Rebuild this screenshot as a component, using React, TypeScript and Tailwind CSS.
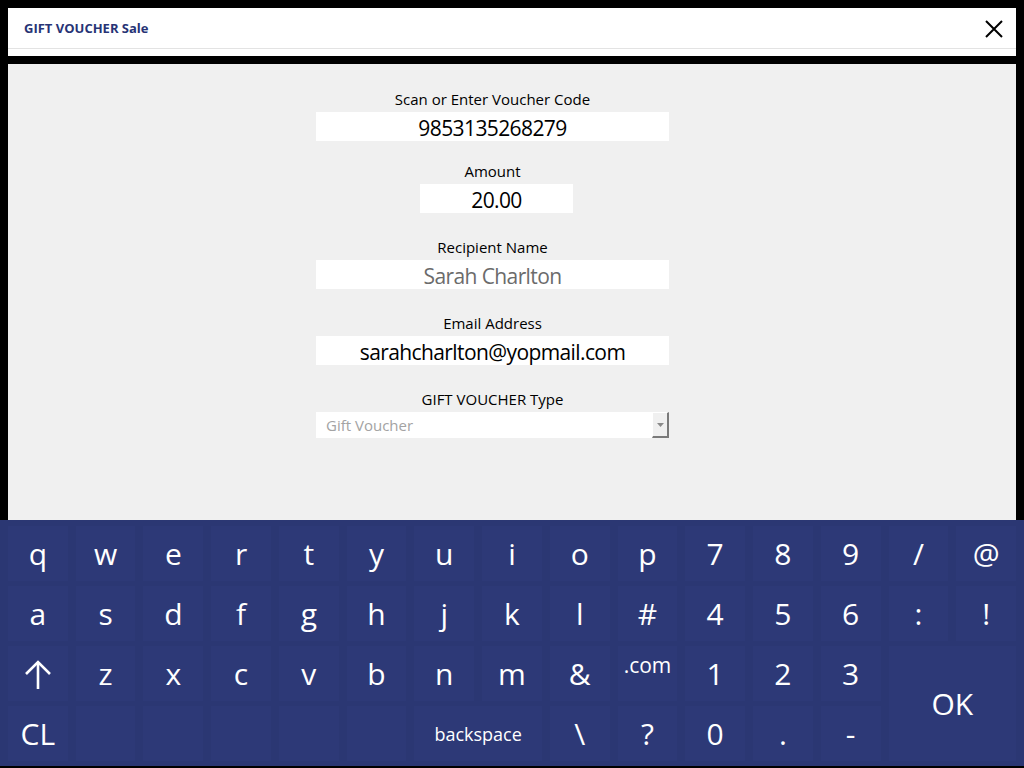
import React from "react";

const font = { fontFamily: '"Open Sans", "Noto Sans", sans-serif' };

type Key = { label: string; col: number; row: number; span?: number; rows?: number };

const rows: string[][] = [
  ["q", "w", "e", "r", "t", "y", "u", "i", "o", "p", "7", "8", "9", "/", "@"],
  ["a", "s", "d", "f", "g", "h", "j", "k", "l", "#", "4", "5", "6", ":", "!"],
  ["SHIFT", "z", "x", "c", "v", "b", "n", "m", "&", ".com", "1", "2", "3"],
];

const keys: Key[] = [];
rows.forEach((r, ri) => r.forEach((label, ci) => keys.push({ label, col: ci, row: ri })));
keys.push({ label: "CL", col: 0, row: 3 });
[1, 2, 3, 4, 5].forEach((c) => keys.push({ label: "", col: c, row: 3 }));
keys.push({ label: "backspace", col: 6, row: 3, span: 2 });
keys.push({ label: "\\", col: 8, row: 3 });
keys.push({ label: "?", col: 9, row: 3 });
keys.push({ label: "0", col: 10, row: 3 });
keys.push({ label: ".", col: 11, row: 3 });
keys.push({ label: "-", col: 12, row: 3 });
keys.push({ label: "OK", col: 13, row: 2, span: 2, rows: 2 });

function ShiftArrow() {
  return (
    <svg width="28" height="30" viewBox="0 0 28 30" fill="none" stroke="white" strokeWidth="2.6">
      <path d="M14 3 V30" />
      <path d="M2 15 L14 3 L26 15" />
    </svg>
  );
}

function KeyCap({ k }: { k: Key }) {
  let content: React.ReactNode = k.label;
  let cls = "text-[30px]";
  if (k.label === "SHIFT") content = <ShiftArrow />;
  if (k.label === "backspace") cls = "text-[18px]";
  if (k.label === ".com") cls = "text-[21px] -translate-y-2";
  return (
    <div
      className="bg-[#2d3977] flex items-center justify-center text-white leading-none"
      style={{
        gridColumn: `${k.col + 1} / span ${k.span ?? 1}`,
        gridRow: `${k.row + 1} / span ${k.rows ?? 1}`,
      }}
    >
      <span className={cls}>{content}</span>
    </div>
  );
}

function Field({
  label,
  value,
  muted,
  className,
}: {
  label: string;
  value: string;
  muted?: boolean;
  className: string;
}) {
  return (
    <div className={className}>
      <div className="text-[15px] leading-5 text-black text-center">{label}</div>
      <div className="mt-[3px] h-[29px] bg-white flex items-center justify-center pt-1">
        <span
          className={`text-[21px] tracking-[-0.6px] ${muted ? "text-[#6b6b6b]" : "text-black"}`}
        >
          {value}
        </span>
      </div>
    </div>
  );
}

export default function App() {
  return (
    <div className="w-[1024px] h-[768px] bg-black flex flex-col overflow-hidden" style={font}>
      {/* Header */}
      <div className="mx-2 mt-2 bg-white flex flex-col">
        <div className="h-[40px] flex items-center justify-between pl-4 pr-[13px] pt-px">
          <span className="text-[13px] font-bold text-[#273375]">GIFT VOUCHER Sale</span>
          <svg width="18" height="18" viewBox="0 0 18 18" stroke="black" strokeWidth="2">
            <path d="M1 1 L17 17 M17 1 L1 17" />
          </svg>
        </div>
        <div className="h-px bg-[#e3e3e3]" />
        <div className="h-[7px]" />
      </div>

      {/* Form */}
      <div className="mx-2 mt-2 h-[456px] bg-[#f0f0f0] pl-[308px] pt-[25px]">
        <div className="w-[353px] flex flex-col">
          <Field label="Scan or Enter Voucher Code" value="9853135268279" className="" />
          <div className="mt-[20px] flex flex-col items-center">
            <div className="text-[15px] leading-5 text-black">Amount</div>
            <div className="mt-[3px] ml-[8px] w-[153px] h-[29px] bg-white flex items-center justify-center pt-1">
              <span className="text-[21px] tracking-[-0.6px] text-black">20.00</span>
            </div>
          </div>
          <Field label="Recipient Name" value="Sarah Charlton" muted className="mt-[24px]" />
          <Field label="Email Address" value="sarahcharlton@yopmail.com" className="mt-[24px]" />
          <div className="mt-[24px]">
            <div className="text-[15px] leading-5 text-black text-center">GIFT VOUCHER Type</div>
            <div className="mt-[3px] h-[26px] bg-white flex items-center">
              <span className="flex-1 pl-[10px] text-[15px] text-[#a3a3a3]">Gift Voucher</span>
              <div className="w-[17px] h-[26px] bg-[#f0f0f0] border-t border-l border-white border-r-2 border-b-2 border-r-[#7a7a7a] border-b-[#7a7a7a] flex items-center justify-center">
                <svg width="7" height="4" viewBox="0 0 7 4">
                  <path d="M0 0 H7 L3.5 4 Z" fill="#8a8a8a" />
                </svg>
              </div>
            </div>
          </div>
        </div>
      </div>

      {/* Keyboard */}
      <div className="h-[246px] bg-[#2b3773] px-2 pt-[6px] pb-[5px]">
        <div className="grid grid-cols-15 grid-rows-4 gap-x-2 gap-y-[5px] h-full">
          {keys.map((k, i) => (
            <KeyCap key={i} k={k} />
          ))}
        </div>
      </div>
    </div>
  );
}
